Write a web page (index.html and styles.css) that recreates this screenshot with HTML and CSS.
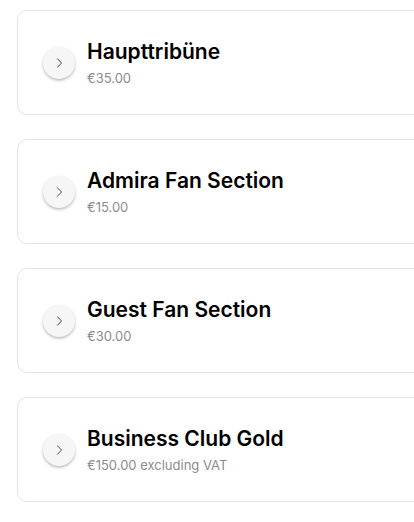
FILE: index.html
```html
<!DOCTYPE html>
<html>
<head>
<meta charset="utf-8">
<link rel="stylesheet" href="styles.css">
</head>
<body>
<div class="list">
  <div class="card">
    <div class="chev"><svg width="12" height="12" viewBox="0 0 12 12"><path d="M4.2 1.5 L8.5 6 L4.2 10.5" fill="none" stroke="#555" stroke-width="1"/></svg></div>
    <div class="info">
      <div class="title">Haupttribüne</div>
      <div class="price">€35.00</div>
    </div>
  </div>
  <div class="card">
    <div class="chev"><svg width="12" height="12" viewBox="0 0 12 12"><path d="M4.2 1.5 L8.5 6 L4.2 10.5" fill="none" stroke="#555" stroke-width="1"/></svg></div>
    <div class="info">
      <div class="title">Admira Fan Section</div>
      <div class="price">€15.00</div>
    </div>
  </div>
  <div class="card">
    <div class="chev"><svg width="12" height="12" viewBox="0 0 12 12"><path d="M4.2 1.5 L8.5 6 L4.2 10.5" fill="none" stroke="#555" stroke-width="1"/></svg></div>
    <div class="info">
      <div class="title">Guest Fan Section</div>
      <div class="price">€30.00</div>
    </div>
  </div>
  <div class="card">
    <div class="chev"><svg width="12" height="12" viewBox="0 0 12 12"><path d="M4.2 1.5 L8.5 6 L4.2 10.5" fill="none" stroke="#555" stroke-width="1"/></svg></div>
    <div class="info">
      <div class="title">Business Club Gold</div>
      <div class="price">€150.00 excluding VAT</div>
    </div>
  </div>
</div>
</body>
</html>
```
FILE: styles.css
```css
html, body {
  margin: 0;
  padding: 0;
  background: #fff;
  overflow: hidden;
}
body {
  font-family: "Inter", "Liberation Sans", sans-serif;
}
.list {
  display: flex;
  flex-direction: column;
  gap: 24px;
  padding: 10px 0 0 17px;
  overflow: hidden;
}
.card {
  margin-right: -12px;
  height: 105px;
  box-sizing: border-box;
  border: 1px solid #e3e3e3;
  border-radius: 10px;
  display: flex;
  align-items: center;
  padding-left: 25px;
  gap: 12px;
}
.chev {
  width: 32px;
  height: 32px;
  border-radius: 50%;
  background: #f6f6f6;
  box-shadow: 0 1.5px 3px rgba(0,0,0,0.28);
  display: flex;
  align-items: center;
  justify-content: center;
  flex-shrink: 0;
}
.info {
  display: flex;
  flex-direction: column;
  gap: 6px;
}
.title {
  font-size: 21px;
  font-weight: 600;
  color: #000;
  line-height: 24px;
}
.price {
  font-size: 13px;
  color: #8c8c8c;
  line-height: 16px;
}
```
